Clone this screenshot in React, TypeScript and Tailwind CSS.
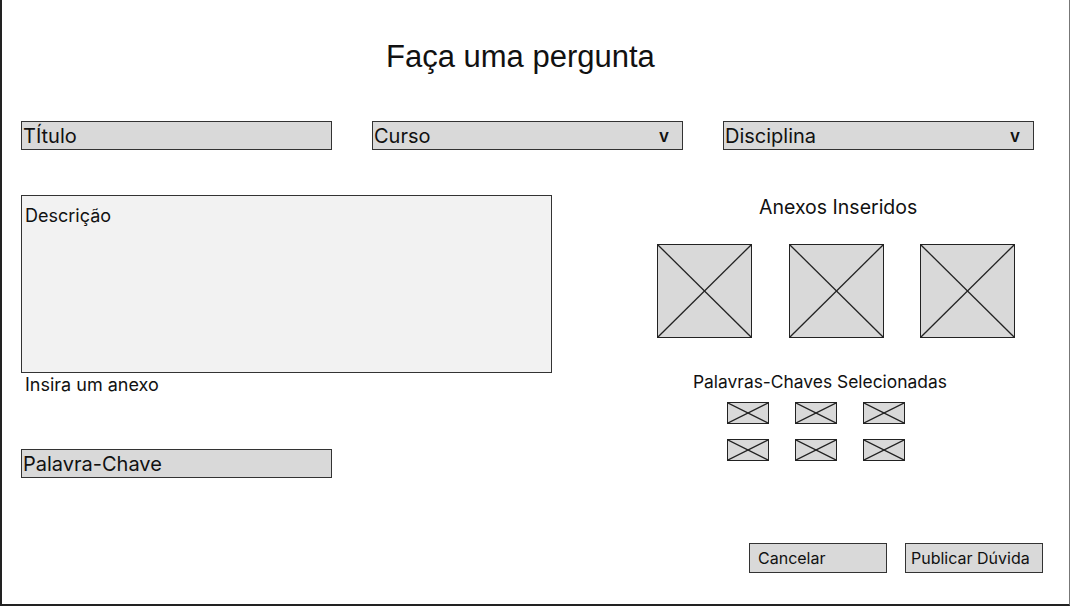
import React from 'react';

function CrossBox({ className }: { className: string }) {
    return (
        <div className={`relative bg-[#d9d9d9] border-[1.5px] border-[#222] ${className}`}>
            <svg className="absolute inset-0 w-full h-full" preserveAspectRatio="none" viewBox="0 0 100 100">
                <line x1="0" y1="0" x2="100" y2="100" stroke="#222" strokeWidth="1.3" vectorEffect="non-scaling-stroke" />
                <line x1="100" y1="0" x2="0" y2="100" stroke="#222" strokeWidth="1.3" vectorEffect="non-scaling-stroke" />
            </svg>
        </div>
    );
}

function Field({ label, select }: { label: string; select?: boolean }) {
    return (
        <div className="w-[311px] h-[29px] bg-[#d9d9d9] border border-[#333] flex items-center justify-between pl-[1px] pr-[13px] text-[20px] leading-[26px] text-[#111]">
            <span>{label}</span>
            {select && <span className="text-[17px] font-semibold">v</span>}
        </div>
    );
}

export default function App() {
    return (
        <div
            className="w-[1070px] h-[606px] bg-white border-l-2 border-b-2 border-r border-l-[#222] border-b-[#222] border-r-[#777] flex flex-col text-[#111]"
            style={{ fontFamily: 'Inter, "Noto Sans", sans-serif' }}
        >
            {/* Title */}
            <h1
                className="pl-[384px] pt-[39px] text-[31px] leading-[36px]"
                style={{ fontFamily: '"Liberation Sans", Arial, sans-serif' }}
            >
                Faça uma pergunta
            </h1>

            {/* Top fields */}
            <div className="flex gap-[40px] pl-[19px] mt-[46px]">
                <Field label="TÍtulo" />
                <Field label="Curso" select />
                <Field label="Disciplina" select />
            </div>

            {/* Main */}
            <div className="flex pl-[19px] mt-[45px]">
                {/* Left column */}
                <div className="w-[531px] flex flex-col">
                    <div className="h-[178px] bg-[#f2f2f2] border border-[#333] pl-[3px] pt-[8px] text-[18px] leading-[24px]">
                        Descrição
                    </div>
                    <div className="pl-[4px] text-[18px] leading-[24px]">Insira um anexo</div>
                    <div className="mt-[52px]">
                        <Field label="Palavra-Chave" />
                    </div>
                </div>

                {/* Right column */}
                <div className="w-[358px] ml-[105px] flex flex-col">
                    <div className="text-[19.5px] leading-[24px] pl-[102px]">Anexos Inseridos</div>
                    <div className="flex justify-between mt-[25px]">
                        <CrossBox className="w-[95px] h-[94px]" />
                        <CrossBox className="w-[95px] h-[94px]" />
                        <CrossBox className="w-[95px] h-[94px]" />
                    </div>
                    <div className="ml-[36px] mt-[33px] text-[17.4px] leading-[22px] whitespace-nowrap">Palavras-Chaves Selecionadas</div>
                    <div className="ml-[70px] mt-[9px] grid grid-cols-[repeat(3,42px)] gap-x-[26px] gap-y-[15px]">
                        {Array.from({ length: 6 }).map((_, i) => (
                            <CrossBox key={i} className="w-[42px] h-[22px]" />
                        ))}
                    </div>
                </div>
            </div>

            {/* Actions */}
            <div className="flex-1" />
            <div className="flex justify-end gap-[18px] pr-[26px] mb-[31px]">
                <button className="w-[138px] h-[30px] bg-[#d9d9d9] border-[1.5px] border-[#333] text-left pl-[8px] text-[16px]">
                    Cancelar
                </button>
                <button className="w-[138px] h-[30px] bg-[#d9d9d9] border-[1.5px] border-[#333] text-left pl-[5px] text-[16px]">
                    Publicar Dúvida
                </button>
            </div>
        </div>
    );
}
